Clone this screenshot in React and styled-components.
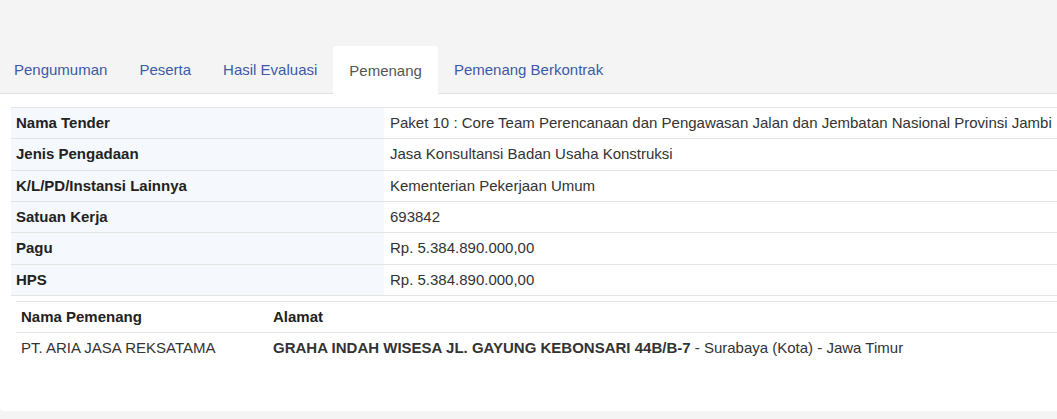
import React from 'react';
import styled, { createGlobalStyle } from 'styled-components';

const GlobalStyle = createGlobalStyle`
html, body {
    margin: 0;
    padding: 0;
    overflow: hidden;
    background: #f4f4f4;
    font-family: "Liberation Sans", Arial, sans-serif;
}
`;

const Page = styled.div`
width: 1057px;
height: 419px;
padding-top: 46px;
box-sizing: border-box;
background: #f4f4f4;
overflow: hidden;
`;

const TabList = styled.div`
display: flex;
height: 47px;
margin-left: -2px;
border-bottom: 1px solid #e2e2e2;
`;

const Tab = styled.div`
display: flex;
align-items: center;
height: ${props => props.active ? '48px' : '47px'};
padding: 0 16px;
box-sizing: border-box;
font-size: 15px;
white-space: nowrap;
color: ${props => props.active ? '#555' : '#3c5aa8'};
background: ${props => props.active ? '#fff' : 'transparent'};
border-radius: 3px 3px 0 0;
`;

const Panel = styled.div`
width: 1100px;
background: #fff;
padding: 13px 0 42px 11px;
box-sizing: border-box;
border-radius: 0 0 4px 4px;
`;

const InfoTable = styled.table`
width: 1070px;
border-collapse: collapse;
border-top: 1px solid #e4e4e4;
font-size: 15px;
line-height: 20.33px;
`;

const Row = styled.tr`
border-bottom: 1px solid #e4e4e4;
`;

const Label = styled.td`
width: 363px;
padding: 5px;
font-weight: bold;
color: #222;
background: #f5f8fc;
vertical-align: middle;
`;

const Value = styled.td`
padding: 5px 6px;
color: #333;
white-space: nowrap;
`;

const NestedCell = styled.td`
padding: 5px;
`;

const WinnerTable = styled.table`
width: 100%;
border-collapse: collapse;
border-top: 1px solid #e4e4e4;
font-size: 15px;
line-height: 20.33px;
`;

const HeadCell = styled.th`
text-align: left;
padding: 5px;
font-weight: bold;
color: #222;
border-bottom: 1px solid #e4e4e4;
width: ${props => props.width || 'auto'};
`;

const Cell = styled.td`
padding: 5px;
color: #333;
white-space: nowrap;
`;

const tabs = ['Pengumuman', 'Peserta', 'Hasil Evaluasi', 'Pemenang', 'Pemenang Berkontrak'];

const info = [
    ['Nama Tender', 'Paket 10 : Core Team Perencanaan dan Pengawasan Jalan dan Jembatan Nasional Provinsi Jambi'],
    ['Jenis Pengadaan', 'Jasa Konsultansi Badan Usaha Konstruksi'],
    ['K/L/PD/Instansi Lainnya', 'Kementerian Pekerjaan Umum'],
    ['Satuan Kerja', '693842'],
    ['Pagu', 'Rp. 5.384.890.000,00'],
    ['HPS', 'Rp. 5.384.890.000,00'],
];

const App = () => {
    return (
        <>
        <GlobalStyle />
        <Page>
            <TabList>
                {tabs.map(t => <Tab key={t} active={t === 'Pemenang'}>{t}</Tab>)}
            </TabList>
            <Panel>
                <InfoTable>
                    <tbody>
                        {info.map(([k, v]) => (
                            <Row key={k}>
                                <Label>{k}</Label>
                                <Value>{v}</Value>
                            </Row>
                        ))}
                        <tr>
                            <NestedCell colSpan={2}>
                                <WinnerTable>
                                    <thead>
                                        <tr>
                                            <HeadCell width="242px">Nama Pemenang</HeadCell>
                                            <HeadCell>Alamat</HeadCell>
                                        </tr>
                                    </thead>
                                    <tbody>
                                        <tr>
                                            <Cell>PT. ARIA JASA REKSATAMA</Cell>
                                            <Cell><b>GRAHA INDAH WISESA JL. GAYUNG KEBONSARI 44B/B-7</b> - Surabaya (Kota) - Jawa Timur</Cell>
                                        </tr>
                                    </tbody>
                                </WinnerTable>
                            </NestedCell>
                        </tr>
                    </tbody>
                </InfoTable>
            </Panel>
        </Page>
        </>
    );
};

export default App;
